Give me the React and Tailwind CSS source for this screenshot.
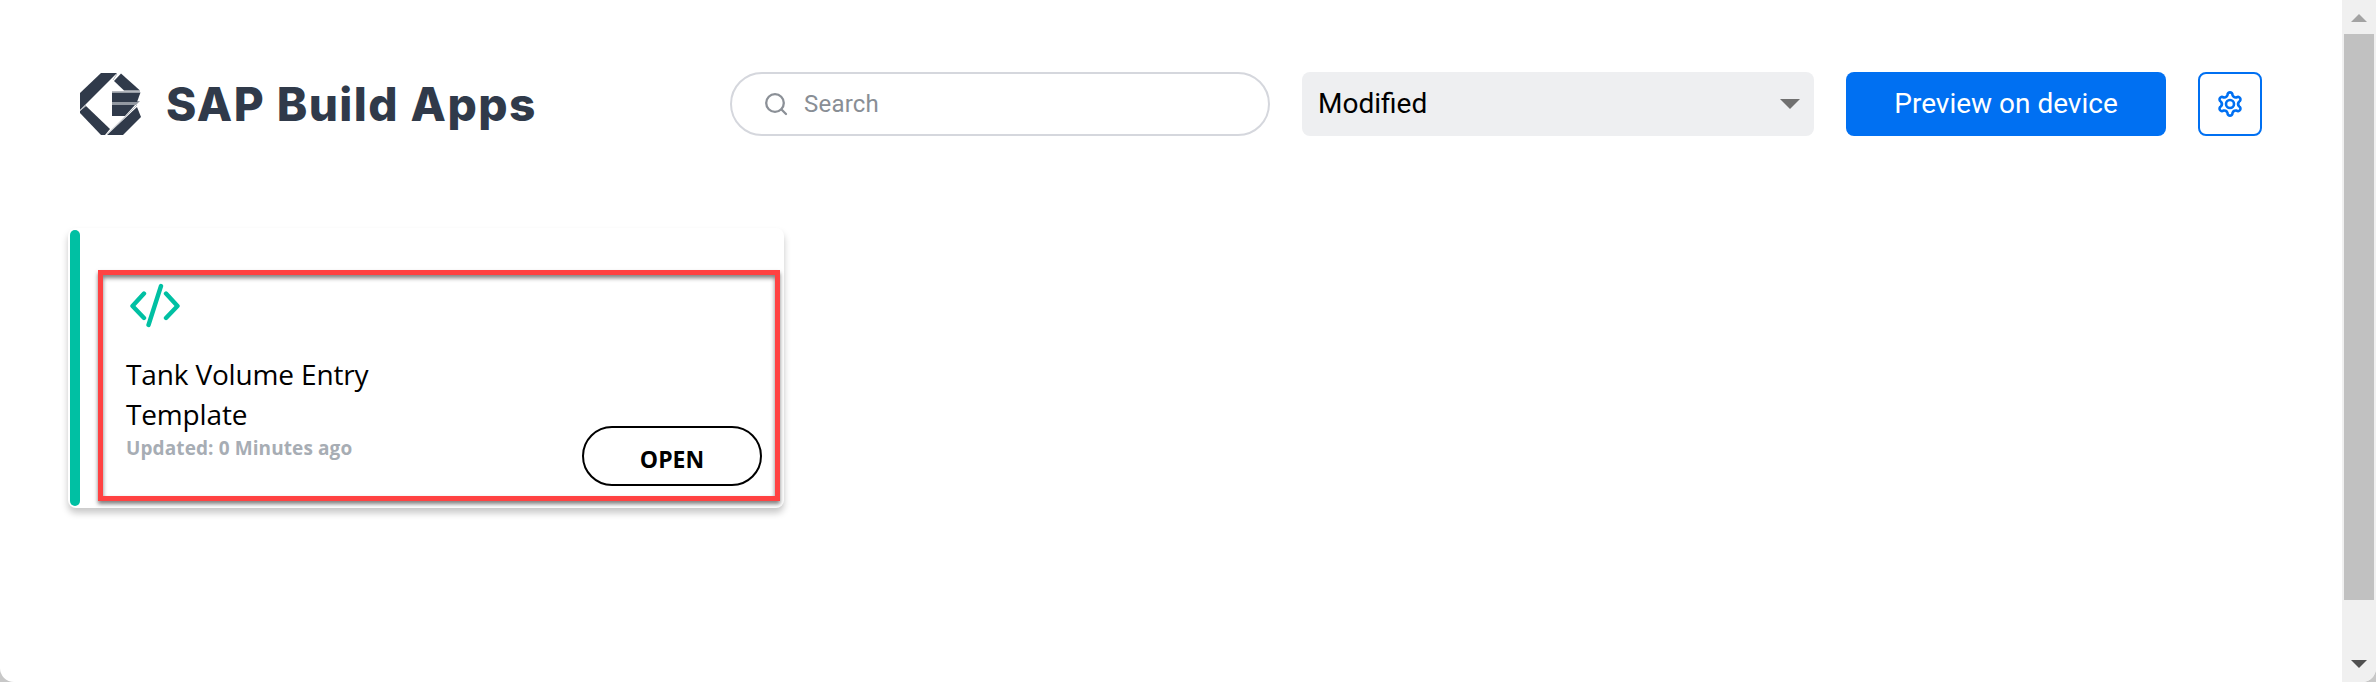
import React from "react";

function Logo() {
  return (
    <svg className="h-[62px] w-[62px] shrink-0" viewBox="0 0 62 62" fill="#303a4a">
      <path d="M32 28H60L56 32H32Z" fill="#9298a1" />
      <path d="M21 0H37L6 31L0 37V20Z" />
      <path d="M41 0.5L60 17.5H44L34 8Z" />
      <path d="M32 19.5H60.5L57 29H32Z" />
      <path d="M32 32H55L45 43H32Z" />
      <path d="M6 33L30 56L25 62H21L0 40V38Z" />
      <path d="M57 34L61 44L43 62H27Z" />
      <path d="M0 37.5L6 32M32 18.5H60M57 32L27 61.5M37 1L33 7" fill="none" stroke="#b4b8be" strokeWidth="1" />
    </svg>
  );
}

function Header() {
  return (
    <header className="flex h-16 items-center">
      <Logo />
      <h1 className="ml-[24px] w-[564px] whitespace-nowrap font-['Inter'] text-[46px] leading-[62px] font-extrabold tracking-[1.45px] text-[#303a4a]">
        SAP Build Apps
      </h1>
      <div className="flex h-16 w-[540px] items-center rounded-full border-2 border-[#d5d7dd] pl-[33px]">
        <svg className="h-6 w-6" viewBox="0 0 24 24" fill="none" stroke="#8b9097" strokeWidth="2.3" strokeLinecap="round">
          <circle cx="10" cy="11" r="8.8" />
          <path d="M16.5 17.5L21 22" />
        </svg>
        <span className="ml-[15px] font-['Roboto'] text-2xl tracking-[0.2px] text-[#898e95]">Search</span>
      </div>
      <div className="ml-8 flex h-16 w-[512px] items-center justify-between rounded-lg bg-[#eeeff1] pr-3.5 pl-4">
        <span className="font-['Roboto'] text-[28px] text-black">Modified</span>
        <svg className="h-[10px] w-5" viewBox="0 0 20 10" fill="#707070"><path d="M0 0H20L10 10Z" /></svg>
      </div>
      <button className="ml-8 h-16 w-80 rounded-lg bg-[#0070f2] font-['Roboto'] text-[28px] text-white">
        Preview on device
      </button>
      <button className="ml-8 flex h-16 w-16 items-center justify-center rounded-lg border-2 border-[#0070f2]">
        <svg className="h-7 w-7" viewBox="0 0 28 28" fill="none" stroke="#0070f2" strokeWidth="2.6" strokeLinejoin="round">
          <path d="M11.57 4.92C11.34 1.48 16.66 1.48 16.43 4.92Q17.5 7.94 20.65 7.35C23.51 5.44 26.17 10.04 23.08 11.57Q21 14 23.08 16.43C26.17 17.96 23.51 22.56 20.65 20.65Q17.5 20.06 16.43 23.08C16.66 26.52 11.34 26.52 11.57 23.08Q10.5 20.06 7.35 20.65C4.49 22.56 1.83 17.96 4.92 16.43Q7 14 4.92 11.57C1.83 10.04 4.49 5.44 7.35 7.35Q10.5 7.94 11.57 4.92Z" />
          <circle cx="14" cy="14" r="4" />
        </svg>
      </button>
    </header>
  );
}

function AppCard() {
  return (
    <section className="relative -ml-3 mt-[92px] flex h-[280px] w-[716px] rounded-lg bg-white p-0.5 shadow-[0_5px_7px_rgba(0,0,0,0.22)]">
      <div className="h-[276px] w-2.5 rounded-full bg-[#00c0a3]" />
      <div className="flex flex-1 justify-between pr-5 pl-[46px]">
        <div className="pt-[52px]">
          <svg className="ml-1 h-[46px] w-[50px]" viewBox="0 0 50 46" fill="none" stroke="#00c0a3" strokeWidth="4.4" strokeLinecap="round" strokeLinejoin="round">
            <path d="M14 11.5L2.5 24L14 36M36 11.5L47.5 24L36 36M31 4L18.5 43" />
          </svg>
          <h2 className="mt-[26px] w-[300px] font-['Open_Sans'] text-[28px] leading-10 font-normal tracking-[-0.15px] text-black">
            Tank Volume Entry<br />Template
          </h2>
          <p className="mt-px font-['Open_Sans'] text-[19px] leading-[26px] font-bold tracking-[0.1px] text-[#a7adb4]">Updated: 0 Minutes ago</p>
        </div>
        <button className="mt-[196px] h-[60px] w-[180px] rounded-full border-2 border-black pt-1.5 font-['Open_Sans'] text-[23px] font-bold text-black">
          OPEN
        </button>
      </div>
      <div className="absolute top-[42px] left-[30px] h-[231px] w-[682px] border-[5px] border-[#ff4242] shadow-[0_3px_4px_rgba(0,0,0,0.5),inset_0_3px_4px_rgba(0,0,0,0.5)]" />
    </section>
  );
}

function Scrollbar() {
  return (
    <aside className="flex w-[34px] flex-col items-center bg-[#f0f0f0]">
      <svg className="mt-3.5 h-2 w-4" viewBox="0 0 16 8" fill="#a3a3a3"><path d="M0 8L8 0L16 8Z" /></svg>
      <div className="mt-3 h-[566px] w-[30px] bg-[#c1c1c1]" />
      <svg className="mt-[60px] h-2 w-4" viewBox="0 0 16 8" fill="#505050"><path d="M0 0L8 8L16 0Z" /></svg>
    </aside>
  );
}

export default function App() {
  return (
    <div className="h-[682px] w-[2376px] overflow-hidden bg-[#c8c8c8]">
      <div className="flex h-full overflow-hidden rounded-b-[14px] bg-white">
        <main className="flex-1 pt-[72px] pl-20">
          <Header />
          <AppCard />
        </main>
        <Scrollbar />
      </div>
    </div>
  );
}
